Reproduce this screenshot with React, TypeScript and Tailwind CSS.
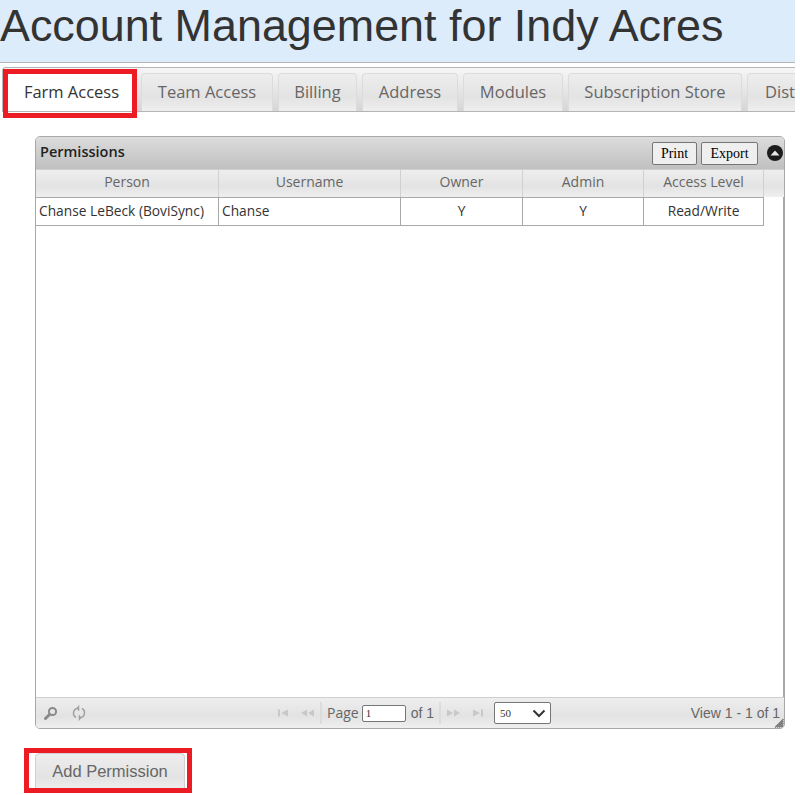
const tabs = [
  { label: "Team Access", w: "w-[132px]" },
  { label: "Billing", w: "w-[79px]" },
  { label: "Address", w: "w-[96px]" },
  { label: "Modules", w: "w-[100px]" },
  { label: "Subscription Store", w: "w-[174px]" },
];

const columns = [
  { label: "Person", w: "w-[183px]" },
  { label: "Username", w: "w-[182px]" },
  { label: "Owner", w: "w-[122px]" },
  { label: "Admin", w: "w-[121px]" },
  { label: "Access Level", w: "w-[120px]" },
];

const gloss = "bg-gradient-to-b from-[#eeeeee] via-[#e3e3e3] via-60% to-[#efefef]";

function SearchIcon() {
  return (
    <svg width="14" height="14" viewBox="0 0 14 14" fill="none" stroke="#8a8a8a">
      <circle cx="8.5" cy="5.5" r="3.6" strokeWidth="2" />
      <path d="M5.5 8.5 L1.5 12.5" strokeWidth="3" strokeLinecap="round" />
    </svg>
  );
}

function RefreshIcon() {
  return (
    <svg width="14" height="16" viewBox="0 0 14 16" fill="none" stroke="#a0a0a0" strokeWidth="1.5">
      <path d="M4 12.5 A5 5 0 0 1 6 3.2" />
      <path d="M10 3.5 A5 5 0 0 1 8 12.8" />
      <path d="M7 0.5 L7 6 L4.8 3.2 Z" fill="#a0a0a0" strokeWidth="0.5" />
      <path d="M7 10 L7 15.5 L9.2 12.8 Z" fill="#a0a0a0" strokeWidth="0.5" />
    </svg>
  );
}

function PagerArrows({ flip, first }: { flip?: boolean; first?: boolean }) {
  return (
    <svg width="15" height="8" viewBox="0 0 15 8" fill="#c8c8c8" className={flip ? "-scale-x-100" : ""}>
      {first ? (
        <>
          <rect x="1" y="0.5" width="2" height="7" />
          <path d="M11 0.5 V7.5 L4 4 Z" />
        </>
      ) : (
        <>
          <path d="M7 0.5 V7.5 L1 4 Z" />
          <path d="M14 0.5 V7.5 L8 4 Z" />
        </>
      )}
    </svg>
  );
}

export default function App() {
  return (
    <div className="relative h-[795px] w-[795px] overflow-hidden bg-white font-['Open_Sans',sans-serif]">
      {/* Encabezado */}
      <div className="h-[63px] border-b border-[#b5b5b5] bg-[#ddecfb]">
        <h1 className="whitespace-nowrap font-['Liberation_Sans',sans-serif] text-[44.88px] leading-[52px] text-[#333]">
          Account Management for Indy Acres
        </h1>
      </div>

      {/* Pestañas */}
      <div className="mt-1 ml-[2px] flex h-[45px] gap-[5px] overflow-hidden rounded-tl-[4px] border-t border-b border-l border-[#b5b5b5] bg-gradient-to-b from-[#f6f6f6] to-[#d6d6d6] pt-[5px] pl-[4px] text-[16.5px]">
        <div className="flex h-[39px] w-[129px] shrink-0 items-center justify-center bg-white pb-[1px] text-[#333]">
          Farm Access
        </div>
        {tabs.map((tab) => (
          <div
            key={tab.label}
            className={`flex h-[39px] shrink-0 items-center justify-center rounded-t-[4px] border border-b-0 border-[#dcdcdc] pb-[1px] ${gloss} text-[#666] ${tab.w}`}
          >
            {tab.label}
          </div>
        ))}
        <div className={`flex h-[39px] w-[80px] shrink-0 items-center rounded-t-[4px] border border-b-0 border-[#dcdcdc] pb-[1px] pl-[17px] ${gloss} text-[#666]`}>
          Dist
        </div>
      </div>

      {/* Tabla de permisos */}
      <div className="mt-6 ml-[35px] flex h-[593px] w-[750px] flex-col overflow-hidden rounded-[5px] border border-[#a8a8a8]">
        <div className="flex h-[32px] shrink-0 items-center bg-gradient-to-b from-[#dcdcdc] to-[#c0c0c0] pl-[4px]">
          <span className="pb-[3px] text-[14.5px] font-semibold text-[#222]">Permissions</span>
          <button className="ml-auto h-[23px] w-[45px] rounded-[2px] border border-[#767676] bg-[#efefef] font-['Liberation_Serif',serif] text-[14px] text-black">
            Print
          </button>
          <button className="mr-[1px] ml-[4px] h-[23px] w-[57px] rounded-[2px] border border-[#767676] bg-[#efefef] font-['Liberation_Serif',serif] text-[14px] text-black">
            Export
          </button>
          <span className="mr-[1px] ml-[8px] flex h-[16px] w-[16px] items-center justify-center rounded-full bg-[#1c1c1c]">
            <svg width="10" height="6" viewBox="0 0 10 6" fill="#e8e8e8">
              <path d="M5 0.5 L9.5 5.5 H0.5 Z" />
            </svg>
          </span>
        </div>

        <div className={`flex h-[28px] shrink-0 border-t border-[#d0d0d0] ${gloss}`}>
          {columns.map((col) => (
            <div
              key={col.label}
              className={`flex shrink-0 items-center justify-center border-r border-[#d0d0d0] pb-[4px] text-[14px] text-[#666] ${col.w}`}
            >
              {col.label}
            </div>
          ))}
        </div>

        <div className="flex-1 border-r border-[#a8a8a8] bg-white">
          <div className="flex h-[29px] w-[728px] border-t border-b border-[#a8a8a8] text-[13.75px] text-[#333]">
            <div className="flex w-[183px] shrink-0 items-center border-r border-[#a8a8a8] pb-[1px] pl-[3px] whitespace-nowrap">
              Chanse LeBeck (BoviSync)
            </div>
            <div className="flex w-[182px] shrink-0 items-center border-r border-[#a8a8a8] pb-[1px] pl-[3px]">Chanse</div>
            <div className="flex w-[122px] shrink-0 items-center justify-center border-r border-[#a8a8a8] pb-[1px]">Y</div>
            <div className="flex w-[121px] shrink-0 items-center justify-center border-r border-[#a8a8a8] pb-[1px]">Y</div>
            <div className="flex w-[120px] shrink-0 items-center justify-center border-r border-[#a8a8a8] pb-[1px]">
              Read/Write
            </div>
          </div>
        </div>

        {/* Paginador */}
        <div className={`relative flex h-[31px] shrink-0 items-center border-t border-[#d0d0d0] ${gloss} text-[14px] text-[#666]`}>
          <div className="ml-[8px] flex w-[233px] items-center gap-[14px]">
            <SearchIcon />
            <RefreshIcon />
          </div>
          <div className="flex items-center gap-[8px]">
            <PagerArrows first />
            <PagerArrows />
          </div>
          <span className="mx-[5px] h-[22px] w-[2px] bg-[#dcdcdc]" />
          <span className="pb-[2px]">Page</span>
          <input
            readOnly
            value="1"
            className="mr-[5px] ml-[3px] h-[17px] w-[44px] rounded-[2px] border border-[#767676] bg-white pl-[3px] font-['Liberation_Serif',serif] text-[11px] text-[#333]"
          />
          <span className="font-['Liberation_Sans',sans-serif]">of 1</span>
          <span className="mx-[5px] h-[22px] w-[2px] bg-[#dcdcdc]" />
          <div className="flex items-center gap-[8px]">
            <PagerArrows flip />
            <PagerArrows flip first />
          </div>
          <div className="ml-[10px] flex h-[22px] w-[57px] items-center justify-between rounded-[2px] border border-[#767676] bg-white pr-[4px] pl-[5px] font-['Liberation_Serif',serif] text-[11px] text-[#333]">
            50
            <svg width="14" height="9" viewBox="0 0 14 9" fill="none" stroke="#333" strokeWidth="2">
              <path d="M1.5 1.5 L7 7 L12.5 1.5" />
            </svg>
          </div>
          <span className="ml-auto pr-[4px] font-['Liberation_Sans',sans-serif]">View 1 - 1 of 1</span>
          <svg width="10" height="10" viewBox="0 0 10 10" stroke="#777" className="absolute right-0 bottom-0">
            <path d="M9.5 1 L1 9.5 M9.5 3 L3 9.5 M9.5 5 L5 9.5 M9.5 7 L7 9.5" strokeWidth="1.2" />
          </svg>
        </div>
      </div>

      <button className={`mt-[24px] ml-[35px] block h-[40px] w-[150px] rounded-[4px] border border-[#d0d0d0] pb-[3px] ${gloss} font-['Liberation_Sans',sans-serif] text-[16.5px] text-[#666]`}>
        Add Permission
      </button>

      {/* Recuadros rojos de anotación */}
      <div className="absolute top-[69px] left-[3px] h-[49px] w-[134px] border-[5px] border-[#ed1c24]" />
      <div className="absolute top-[748px] left-[24px] h-[45px] w-[168px] border-[5px] border-[#ed1c24]" />
    </div>
  );
}
